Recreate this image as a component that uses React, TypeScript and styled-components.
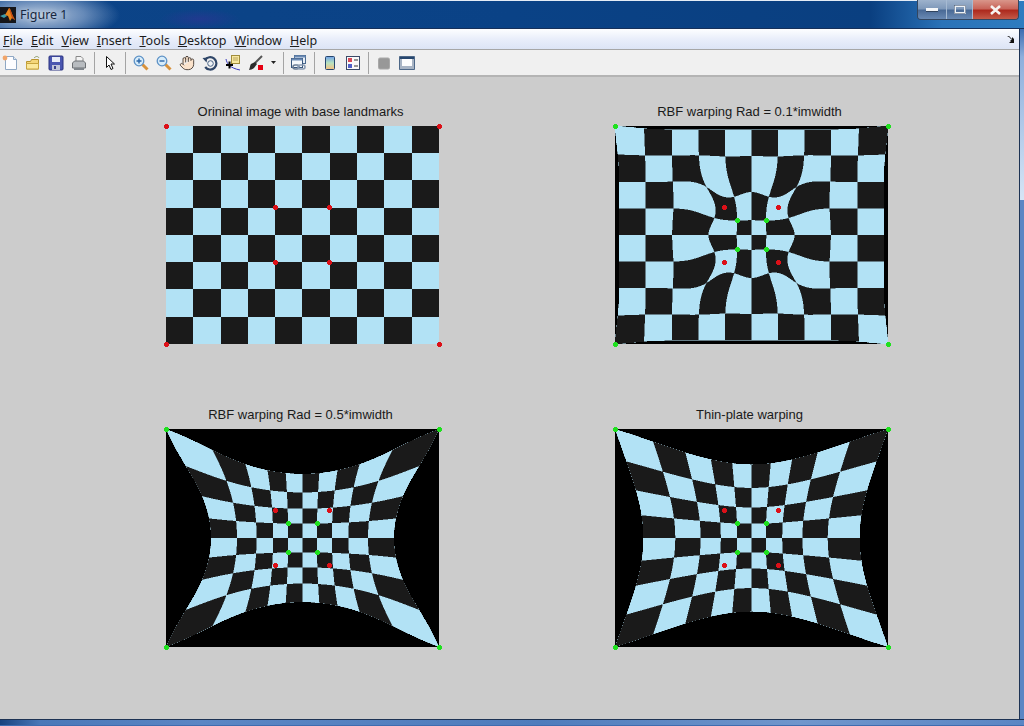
import React from 'react';
import styled, { createGlobalStyle } from 'styled-components';
import { Hand } from 'lucide-react';

const GlobalStyle = createGlobalStyle`
  html, body { margin: 0; padding: 0; background: #ccc; overflow: hidden; }
  #root { width: 1024px; height: 726px; }
`;

const W = 273;
const H = 218;
const CX = W / 2;
const CY = H / 2;
const CW = W / 10;
const CH = H / 8;
type Pt = [number, number];
type Kernel = (r: number) => number;
type Warp = (x: number, y: number) => Pt;

const corners: Pt[] = [[-CX, -CY], [CX, -CY], [-CX, CY], [CX, CY]];
const srcInner: Pt[] = [[-CW, -CH], [CW, -CH], [-CW, CH], [CW, CH]];
const dstInner: Pt[] = [[-14.5, -14.5], [14.5, -14.5], [-14.5, 14.5], [14.5, 14.5]];
const SRC = [...corners, ...srcInner];
const DST = [...corners, ...dstInner];

const mirror = (p: Pt): Pt[] => [[p[0], p[1]], [-p[0], p[1]], [p[0], -p[1]], [-p[0], -p[1]]];
const guides: [Pt, Pt][] = [
  [[-36, -27], [-54.6, -40.9]],
  [[-27, -38], [-40.9, -54.5]],
  [[-45, -48], [-54.6, -54.5]],
];
const axisGuides: [Pt, Pt][] = [
  [[-43, 0], [-54.6, 0]],
  [[43, 0], [54.6, 0]],
  [[0, -43], [0, -54.5]],
  [[0, 43], [0, 54.5]],
];
const fineFrom: Pt[] = [...DST, ...guides.flatMap((g) => mirror(g[0])), ...axisGuides.map((g) => g[0])];
const fineTo: Pt[] = [...SRC, ...guides.flatMap((g) => mirror(g[1])), ...axisGuides.map((g) => g[1])];

function solve(A: number[][], b: number[]): number[] {
  const n = b.length;
  const M = A.map((row, i) => [...row, b[i]]);
  for (let c = 0; c < n; c++) {
    let p = c;
    for (let r = c + 1; r < n; r++) if (Math.abs(M[r][c]) > Math.abs(M[p][c])) p = r;
    [M[c], M[p]] = [M[p], M[c]];
    for (let r = 0; r < n; r++) {
      if (r === c) continue;
      const f = M[r][c] / M[c][c];
      for (let k = c; k <= n; k++) M[r][k] -= f * M[c][k];
    }
  }
  return M.map((row, i) => row[n] / row[i]);
}

function makeWarp(kernel: Kernel, affine: boolean, from: Pt[] = DST, to: Pt[] = SRC): Warp {
  const n = from.length;
  const size = affine ? n + 3 : n;
  const A: number[][] = [];
  for (let i = 0; i < size; i++) {
    const row = new Array(size).fill(0);
    if (i < n) {
      for (let j = 0; j < n; j++) row[j] = kernel(Math.hypot(from[i][0] - from[j][0], from[i][1] - from[j][1]));
      if (affine) {
        row[n] = 1;
        row[n + 1] = from[i][0] / W;
        row[n + 2] = from[i][1] / H;
      }
    } else {
      const k = i - n;
      for (let j = 0; j < n; j++) row[j] = k === 0 ? 1 : k === 1 ? from[j][0] / W : from[j][1] / H;
    }
    A.push(row);
  }
  const pad = new Array(size - n).fill(0);
  const wx = solve(A, [...to.map((s, i) => s[0] - from[i][0]), ...pad]);
  const wy = solve(A, [...to.map((s, i) => s[1] - from[i][1]), ...pad]);
  return (x, y) => {
    let u = x;
    let v = y;
    for (let j = 0; j < n; j++) {
      const k = kernel(Math.hypot(x - from[j][0], y - from[j][1]));
      u += wx[j] * k;
      v += wy[j] * k;
    }
    if (affine) {
      u += wx[n] + (wx[n + 1] * x) / W + (wx[n + 2] * y) / H;
      v += wy[n] + (wy[n + 1] * x) / W + (wy[n + 2] * y) / H;
    }
    return [u, v];
  };
}

const LIGHT = [178, 226, 245];
const DARK = [26, 26, 26];
const shades = [0, 1, 2, 3, 4].map((i) => {
  const t = i / 4;
  const c = LIGHT.map((l, k) => Math.round(DARK[k] + (l - DARK[k]) * t));
  return `rgb(${c[0]},${c[1]},${c[2]})`;
});

function checker(u: number, v: number): number {
  const c = Math.floor((u + CX) / CW);
  const r = Math.floor((v + CY) / CH);
  return (c + r) % 2 === 0 ? 1 : 0;
}

const SMOOTH: Pt[] = [[-0.25, -0.25], [0.25, -0.25], [-0.25, 0.25], [0.25, 0.25]];
const CRISP: Pt[] = [[0, 0]];

function rasterize(warp: Warp, smooth: boolean): string[] {
  const paths = shades.map(() => [] as string[]);
  const offsets = smooth ? SMOOTH : CRISP;
  for (let y = 0; y < H; y++) {
    let runStart = 0;
    let runClass = -2;
    for (let x = 0; x <= W; x++) {
      let cls = -2;
      if (x < W) {
        const px = x + 0.5 - CX;
        const py = y + 0.5 - CY;
        const [cu, cv] = warp(px, py);
        if (Math.abs(cu) >= CX || Math.abs(cv) >= CY) cls = -1;
        else {
          let s = 0;
          for (const [ox, oy] of offsets) {
            const [u, v] = warp(px + ox, py + oy);
            s += checker(u, v);
          }
          cls = Math.round((s * 4) / offsets.length);
        }
      }
      if (cls !== runClass) {
        if (runClass >= 0) paths[runClass].push(`M${runStart} ${y}h${x - runStart}v1h${runStart - x}z`);
        runStart = x;
        runClass = cls;
      }
    }
  }
  return paths.map((p) => p.join(''));
}

const gauss = (s: number): Kernel => (r) => Math.exp(-(r * r) / (s * s));
const plate: Kernel = (r) => Math.pow(r, 2.6);
const identity: Warp = (x, y) => [x, y];

type PlotSpec = { title: string; warp: Warp; targets: boolean };
const plots: PlotSpec[] = [
  { title: 'Orininal image with base landmarks', warp: identity, targets: false },
  { title: 'RBF warping Rad = 0.1*imwidth', warp: makeWarp(gauss(28), true, fineFrom, fineTo), targets: true },
  { title: 'RBF warping Rad = 0.5*imwidth', warp: makeWarp(gauss(130), false), targets: true },
  { title: 'Thin-plate warping', warp: makeWarp(plate, true), targets: true },
];

const marker = (p: Pt) => {
  const x = Math.floor(p[0] + CX);
  const y = Math.floor(p[1] + CY);
  return `M${x - 1} ${y - 2}h3v1h1v3h-1v1h-3v-1h-1v-3h1z`;
};

const Window = styled.div`
  width: 1024px;
  height: 726px;
  display: flex;
  flex-direction: column;
  background: #5b86c4;
  overflow: hidden;
`;

const TitleBar = styled.div`
  height: 29px;
  flex: none;
  display: flex;
  align-items: flex-start;
  box-sizing: border-box;
  border-top: 1px solid #e4ecf6;
  border-bottom: 1px solid #16305a;
  background:
    radial-gradient(ellipse 80px 26px at 40px 14px, rgba(190, 205, 225, 0.95), rgba(150, 175, 210, 0.65) 55%, rgba(60, 100, 160, 0) 100%),
    radial-gradient(ellipse 40px 10px at 200px 18px, rgba(50, 50, 150, 0.55), rgba(50, 50, 150, 0)),
    linear-gradient(90deg, #0c4488 0%, #0a4286 50%, #0a3f80 85%, #2a72b8 92%, #2e7cc0 100%);
`;

const AppIcon = styled.svg`
  width: 16px;
  height: 16px;
  margin: 6px 0 0 0;
  flex: none;
`;

const TitleText = styled.span`
  font: 12.5px/16px 'Noto Sans', sans-serif;
  color: #17273f;
  margin: 6px 0 0 4px;
  text-shadow: 0 0 6px rgba(255, 255, 255, 0.6);
  flex: 1;
`;

const Controls = styled.div`
  display: flex;
  height: 20px;
  margin-top: -1px;
  margin-right: 5px;
  border: 1px solid #33465f;
  border-top: none;
  border-radius: 0 0 4px 4px;
  overflow: hidden;
  box-sizing: border-box;
`;

const ControlButton = styled.div<{ $w: number; $close?: boolean }>`
  width: ${(p) => p.$w}px;
  display: flex;
  align-items: center;
  justify-content: center;
  box-sizing: border-box;
  border-right: ${(p) => (p.$close ? 'none' : '1px solid #a6bad2')};
  background: ${(p) =>
    p.$close
      ? 'linear-gradient(180deg, #d9968a 0%, #c8655a 45%, #ad2a1e 55%, #c45a48 100%)'
      : 'linear-gradient(180deg, #9db2cc 0%, #7f99ba 45%, #4a6a96 55%, #6a8ab4 100%)'};
`;

const Body = styled.div`
  flex: 1;
  min-height: 0;
  display: flex;
`;

const Client = styled.div`
  width: 1019px;
  flex: none;
  display: flex;
  flex-direction: column;
  border-right: 1px solid #1d3354;
`;

const RightFrame = styled.div`
  flex: 1;
  background: linear-gradient(180deg, #3b6cb0 0, #8eafdc 28px, #d6e5f6 171px, #5b86c4 171px, #5b86c4 100%);
`;

const MenuBar = styled.div`
  height: 20px;
  flex: none;
  box-sizing: content-box;
  display: flex;
  align-items: center;
  gap: 8px;
  padding-left: 3px;
  background: linear-gradient(180deg, #fdfeff 0%, #e9eefa 50%, #dce4f5 100%);
  font: 12.5px/16px 'Noto Sans', sans-serif;
  color: #1c1c1c;
  border-bottom: 1px solid #a6a6a6;
`;

const MenuItem = styled.span`
  display: inline-block;
  padding-top: 3px;
`;

const Key = styled.span`
  text-decoration: underline;
`;

const CollapseIcon = styled.svg`
  width: 8px;
  height: 8px;
  margin-left: auto;
  margin-right: 4px;
`;

const Toolbar = styled.div`
  height: 25px;
  flex: none;
  display: flex;
  align-items: center;
  gap: 7px;
  padding-left: 2px;
  background: #f0f0f0;
  border-bottom: 2px solid #b4b4b4;
`;

const ToolIcon = styled.svg`
  width: 16px;
  height: 16px;
  flex: none;
`;

const HandIcon = styled(Hand)`
  width: 16px;
  height: 16px;
  flex: none;
`;

const DropArrow = styled.svg`
  width: 5px;
  height: 3px;
  flex: none;
`;

const Separator = styled.div`
  width: 1px;
  height: 22px;
  background: #a4a4a4;
  flex: none;
`;

const FigureCanvas = styled.div`
  flex: 1;
  min-height: 0;
  background: #cccccc;
  display: grid;
  grid-template-columns: 273px 273px;
  grid-auto-rows: max-content;
  column-gap: 176px;
  row-gap: 64px;
  padding: 28px 0 0 166px;
`;

const Plot = styled.div`
  display: flex;
  flex-direction: column;
  align-items: center;
`;

const PlotTitle = styled.div`
  font: 13px/14px 'Liberation Sans', Arial, sans-serif;
  color: #1a1a1a;
  margin: 0 4px 7px 0;
  white-space: nowrap;
`;

const Axes = styled.svg`
  width: 273px;
  height: 218px;
  display: block;
  overflow: visible;
  background: #000;
`;

const BottomFrame = styled.div`
  height: 7px;
  flex: none;
  box-sizing: border-box;
  border-top: 1px solid #1d3354;
  border-bottom: 1px solid #3e6cb0;
  background: linear-gradient(90deg, #17427e 0, #4a78b8 40px, #5b86c4 200px, #4f7cbc 540px, #7096cc 800px, #5b86c4 100%);
`;

const PlotView: React.FC<PlotSpec> = ({ title, warp, targets }) => {
  const paths = React.useMemo(() => rasterize(warp, targets), [warp, targets]);
  return (
    <Plot>
      <PlotTitle>{title}</PlotTitle>
      <Axes viewBox={`0 0 ${W} ${H}`}>
        {paths.map((d, i) => (
          <path key={i} d={d} fill={shades[i]} shapeRendering="crispEdges" />
        ))}
        {targets && <path d={DST.map(marker).join('')} fill="#1fe01f" shapeRendering="crispEdges" />}
        <path d={(targets ? srcInner : SRC).map(marker).join('')} fill="#dc1018" shapeRendering="crispEdges" />
      </Axes>
    </Plot>
  );
};

const menus = ['File', 'Edit', 'View', 'Insert', 'Tools', 'Desktop', 'Window', 'Help'];

const App: React.FC = () => (
  <Window>
    <GlobalStyle />
    <TitleBar>
      <AppIcon viewBox="0 0 16 16">
        <rect width="16" height="16" fill="#15161a" />
        <path d="M0 9l5-2 2 2-3 2z" fill="#3a9aa8" />
        <path d="M5 8l4-7c1 0 2 3 3 6l3 6-3-2-2 3-2-5z" fill="#e8861c" />
        <path d="M9 1c1 0 2 3 3 6l3 6-3-2-2-6z" fill="#c84a10" />
      </AppIcon>
      <TitleText>Figure 1</TitleText>
      <Controls>
        <ControlButton $w={29}>
          <svg width="12" height="4" viewBox="0 0 12 4"><rect width="12" height="4" fill="#f4f6f8" /><rect x="0" y="3" width="12" height="1" fill="#30435e" /></svg>
        </ControlButton>
        <ControlButton $w={26}>
          <svg width="12" height="9" viewBox="0 0 12 9"><rect x="1" y="1" width="10" height="7" fill="none" stroke="#eef2f6" strokeWidth="2" /><rect x="0.5" y="0.5" width="11" height="8" fill="none" stroke="#30435e" strokeWidth="0.5" /></svg>
        </ControlButton>
        <ControlButton $w={45} $close>
          <svg width="11" height="10" viewBox="0 0 11 10"><path d="M1 1l9 8M10 1l-9 8" stroke="#f6f2f0" strokeWidth="2.6" /></svg>
        </ControlButton>
      </Controls>
    </TitleBar>
    <Body>
      <Client>
        <MenuBar>
          {menus.map((m) => (
            <MenuItem key={m}><Key>{m[0]}</Key>{m.slice(1)}</MenuItem>
          ))}
          <CollapseIcon viewBox="0 0 8 8"><path d="M0 1h2l3 3V2l2 2v4H2l2-2-1-1H5L2 2z" fill="#111" /></CollapseIcon>
        </MenuBar>
        <Toolbar>
          <ToolIcon viewBox="0 0 16 16"><path d="M3.5 1.5h8l3 3v10h-11z" fill="#fdfdff" stroke="#8fa8c4" /><path d="M11.5 1.5v3h3" fill="#dfe8f2" stroke="#8fa8c4" /><circle cx="3" cy="3" r="2.4" fill="#f0a56a" /></ToolIcon>
          <ToolIcon viewBox="0 0 16 16"><path d="M1.5 6.5h4l1-2h7v9.5h-12z" fill="#f4d67a" stroke="#b8942e" /><path d="M1.5 8.5h12v5.5h-12z" fill="#fbe89a" stroke="#c8a53e" /><path d="M9 3c2-2 4-2 5 0" fill="none" stroke="#8a9a68" /></ToolIcon>
          <ToolIcon viewBox="0 0 16 16"><rect x="1" y="1" width="14" height="14" rx="1" fill="#4a56b0" stroke="#2a3280" /><rect x="4" y="2" width="8" height="5" fill="#e8ecf8" /><rect x="4" y="10" width="8" height="5" fill="#c0c4d8" /><rect x="6" y="11" width="2" height="3" fill="#3a428a" /></ToolIcon>
          <ToolIcon viewBox="0 0 16 16"><path d="M5 1.5h5l2 2v4H5z" fill="#f4f4f4" stroke="#888" /><path d="M1.5 8l2-2h9l2 2v5h-13z" fill="#b8bcc0" stroke="#6c7074" /><path d="M3 13h10v2H3z" fill="#80868c" /></ToolIcon>
          <Separator />
          <ToolIcon viewBox="0 0 16 16"><path d="M4.5 1.5v11l2.5-2.5 2 4.5 2-1-2-4.5h3.5z" fill="#fff" stroke="#111" /></ToolIcon>
          <Separator />
          <ToolIcon viewBox="0 0 16 16"><path d="M9.5 9.5l5 5" stroke="#d8923c" strokeWidth="3" /><circle cx="6" cy="6" r="4.8" fill="#d7ecfa" stroke="#5e92c6" strokeWidth="1.3" /><path d="M3.5 6h5M6 3.5v5" stroke="#2a66a8" strokeWidth="1.4" /></ToolIcon>
          <ToolIcon viewBox="0 0 16 16"><path d="M9.5 9.5l5 5" stroke="#d8923c" strokeWidth="3" /><circle cx="6" cy="6" r="4.8" fill="#d7ecfa" stroke="#5e92c6" strokeWidth="1.3" /><path d="M3.5 6h5" stroke="#2a66a8" strokeWidth="1.4" /></ToolIcon>
          <HandIcon size={16} fill="#fbe3cc" stroke="#4a4038" strokeWidth={1.4} />
          <ToolIcon viewBox="0 0 16 16"><path d="M3 5A6.2 6.2 0 1 1 3.2 12" fill="none" stroke="#2f4668" strokeWidth="2.2" /><path d="M0.5 3l5-.5-1 5z" fill="#2f4668" /><circle cx="8.5" cy="8.5" r="2.8" fill="#eef2f6" stroke="#4a6486" /></ToolIcon>
          <ToolIcon viewBox="0 0 16 16"><path d="M1 4c1 5 4 9 14 11" fill="none" stroke="#3a3ac0" strokeWidth="1" /><rect x="6.5" y="0.5" width="8" height="8" fill="#f8e8a0" stroke="#a08c3c" /><path d="M8 3h5M8 5h5" stroke="#b8a45c" /><path d="M1 10h7M4.5 6.5v7" stroke="#000" strokeWidth="2" /></ToolIcon>
          <ToolIcon viewBox="0 0 16 16"><path d="M14 1L7 8" stroke="#555" strokeWidth="2" /><path d="M7 7l2 2-3 4c-1 1-4 2-5 2 1-2 1-5 2-6z" fill="#2c2c2c" /><rect x="10" y="10" width="5" height="5" fill="#e60012" /></ToolIcon>
          <DropArrow viewBox="0 0 5 3"><path d="M0 0h5L2.5 3z" fill="#222" /></DropArrow>
          <Separator />
          <ToolIcon viewBox="0 0 16 16"><rect x="3.5" y="0.5" width="11" height="8" fill="#e6eef8" stroke="#4a6a90" /><rect x="3.5" y="0.5" width="11" height="2" fill="#6a8ab4" /><rect x="0.5" y="3.5" width="11" height="9" fill="#f4f8fc" stroke="#36557c" /><rect x="0.5" y="3.5" width="11" height="2" fill="#6a8ab4" /><rect x="2" y="10" width="6" height="4" rx="2" fill="none" stroke="#6a7c94" strokeWidth="1.6" /><rect x="7" y="10" width="7" height="4" rx="2" fill="none" stroke="#8a9cb4" strokeWidth="1.6" /></ToolIcon>
          <Separator />
          <ToolIcon viewBox="0 0 16 16">
            <defs><linearGradient id="cb" x1="0" y1="0" x2="0" y2="1"><stop offset="0" stopColor="#6fa0e8" /><stop offset="0.5" stopColor="#b8e4c0" /><stop offset="1" stopColor="#f8c080" /></linearGradient></defs>
            <rect x="3.5" y="1.5" width="9" height="13" rx="1" fill="url(#cb)" stroke="#26466e" />
          </ToolIcon>
          <ToolIcon viewBox="0 0 16 16"><rect x="1.5" y="1.5" width="13" height="13" fill="#fafafa" stroke="#3a4a68" /><rect x="3" y="3" width="4" height="4" fill="#d84a58" /><rect x="3" y="9" width="4" height="4" fill="#5060c8" /><path d="M9 5h4M9 11h4" stroke="#333" /></ToolIcon>
          <Separator />
          <ToolIcon viewBox="0 0 16 16"><rect x="2.5" y="3" width="11" height="11" rx="1.5" fill="#989898" stroke="#a8a8a8" /></ToolIcon>
          <ToolIcon viewBox="0 0 16 16"><rect x="1" y="2" width="14" height="12" fill="#fdfdfd" stroke="#26466e" strokeWidth="1.6" /><rect x="1" y="2" width="14" height="2" fill="#26466e" /><rect x="1" y="11" width="14" height="3" fill="#a8b4c4" /><rect x="1" y="4" width="2" height="8" fill="#a8b4c4" /><rect x="13" y="4" width="2" height="8" fill="#a8b4c4" /></ToolIcon>
        </Toolbar>
        <FigureCanvas>
          {plots.map((p) => (
            <PlotView key={p.title} {...p} />
          ))}
        </FigureCanvas>
      </Client>
      <RightFrame />
    </Body>
    <BottomFrame />
  </Window>
);

export default App;
